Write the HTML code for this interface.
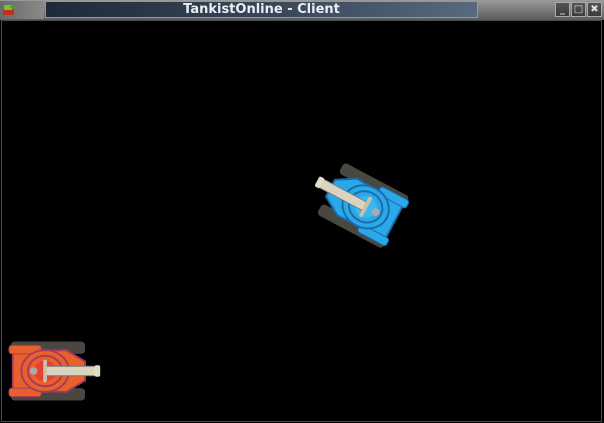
<!DOCTYPE html><html><head><style>
body{margin:0;width:604px;height:423px;background:#000;overflow:hidden;position:relative;font-family:"DejaVu Sans","Liberation Sans",sans-serif}
.tb{position:absolute;left:0;top:0;width:604px;height:20px;background:linear-gradient(#9a9a9a,#5a5a5a);}
.ic{position:absolute;left:0;top:1px;width:44px;height:18px;background:linear-gradient(90deg,#6a6a6a,#8a8a8a)}
.ti{position:absolute;left:45px;top:1px;width:433px;height:17px;background:linear-gradient(90deg,#1e2a38,#3c4b5e 60%,#5a6a7e);border:1px solid #8a9aa8;box-sizing:border-box;color:#e8eef4;font-weight:bold;font-size:13px;text-align:center;line-height:15px}
.bt{position:absolute;top:2px;width:15px;height:15px;background:linear-gradient(#555,#3a3a3a);border:1px solid #aaa;box-sizing:border-box;color:#ddd;font-size:10px;text-align:center;line-height:13px;font-weight:bold}
.fr{position:absolute;left:1px;top:20px;width:601px;height:402px;border:1px solid #4a4a4a;box-sizing:border-box}
</style></head><body>
<div class="tb"></div>
<div class="ic"><svg width="20" height="18"><rect x="3" y="8" width="11" height="6" fill="#c03020"/><rect x="4" y="4" width="8" height="5" fill="#7ac030"/><rect x="10" y="5" width="7" height="2" fill="#5a9a20"/></svg></div>
<div class="ti">TankistOnline - Client</div>
<div class="bt" style="left:555px">_</div><div class="bt" style="left:571px">□</div><div class="bt" style="left:587px">✖</div>
<div class="fr"></div>
<svg width="604" height="423" style="position:absolute;left:0;top:0">
<defs>
<g id="tank">
<rect x="-38" y="-31" width="78" height="13" rx="4" fill="#4a4640"/>
<rect x="-38" y="18" width="78" height="13" rx="4" fill="#4a4640"/>
<path d="M-36 -20 L20 -22 L40 -10 L40 10 L20 22 L-36 20 Z" fill="var(--c)" stroke="var(--d)" stroke-width="2"/>
<rect x="-40" y="-27" width="34" height="9" rx="3" fill="var(--c)" stroke="var(--d)"/>
<rect x="-40" y="18" width="34" height="9" rx="3" fill="var(--c)" stroke="var(--d)"/>
<ellipse cx="-2" cy="0" rx="25" ry="22" fill="var(--c)" stroke="var(--d)" stroke-width="2"/>
<ellipse cx="-2" cy="0" rx="18" ry="16" fill="none" stroke="var(--d)" stroke-width="2"/>
<ellipse cx="-2" cy="0" rx="12" ry="11" fill="var(--e)"/>
<rect x="-2" y="-5" width="55" height="10" rx="3" fill="#d8d4c0" stroke="#777" stroke-width="1"/>
<rect x="50" y="-6" width="6" height="12" rx="2" fill="#e0dcc8"/>
<rect x="-4" y="-12" width="4" height="24" rx="2" fill="#c8c0a8"/>
<circle cx="-14" cy="0" r="4" fill="#aaa"/>
</g>
</defs>
<g style="--c:#e8602a;--d:#a83a60;--e:#e84030" transform="translate(47,371) scale(0.95)"><use href="#tank"/></g>
<g style="--c:#2aa8e8;--d:#1a6aaa;--e:#3ab8f0" transform="translate(364,206) rotate(-152) scale(0.95)"><use href="#tank"/></g>
</svg>
</body></html>
